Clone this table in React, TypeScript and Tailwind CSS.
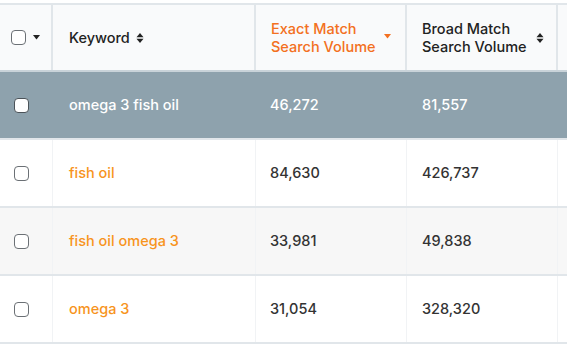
import React from "react";

const cols = "grid grid-cols-[53px_203px_151px_151px_1fr]";

function Box({ dark }: { dark?: boolean }) {
  return (
    <div
      className={`w-[15px] h-[15px] rounded-[4px] border-[1.5px] ${dark ? "border-[#4b5359] bg-white" : "border-[#6b7075] bg-white"}`}
    />
  );
}

function SortBoth() {
  return (
    <svg width="8" height="12" viewBox="0 0 8 12" className="shrink-0">
      <path d="M4 1 L7.5 5.2 L0.5 5.2 Z" fill="#222" />
      <path d="M4 11 L7.5 6.8 L0.5 6.8 Z" fill="#222" />
    </svg>
  );
}

const rows = [
  { kw: "omega 3 fish oil", exact: "46,272", broad: "81,557", sel: true },
  { kw: "fish oil", exact: "84,630", broad: "426,737" },
  { kw: "fish oil omega 3", exact: "33,981", broad: "49,838", alt: true },
  { kw: "omega 3", exact: "31,054", broad: "328,320" },
];

export default function App() {
  return (
    <div
      className="w-[567px] h-[345px] bg-white overflow-hidden pt-[3px]"
      style={{ fontFamily: 'Inter, "Liberation Sans", sans-serif' }}
    >
      <div className={`${cols} h-[67px] bg-[#f9fafb] border-t-2 border-[#e1e6ea] text-[14.5px] font-medium text-[#222] leading-[18px]`}>
        <div className="flex items-center pl-[11px] gap-[7px] border-r-2 border-[#e1e6ea]">
          <Box />
          <svg width="7" height="5" viewBox="0 0 7 5">
            <path d="M0 0 L7 0 L3.5 4.5 Z" fill="#222" />
          </svg>
        </div>
        <div className="flex items-center pl-[16px] gap-[6px] border-r-2 border-[#e1e6ea]">
          <span>Keyword</span>
          <SortBoth />
        </div>
        <div className="flex items-center pl-[15px] border-r-2 border-[#e1e6ea] text-[#f37021]">
          <span className="w-[112px]">Exact Match Search Volume</span>
          <svg width="7" height="5" viewBox="0 0 7 5" className="ml-[1px] mb-[2px]">
            <path d="M0 0 L7 0 L3.5 4.5 Z" fill="#f37021" />
          </svg>
        </div>
        <div className="flex items-center pl-[15px] border-r-2 border-[#e1e6ea]">
          <span className="w-[112px]">Broad Match Search Volume</span>
          <span className="ml-[2px]"><SortBoth /></span>
        </div>
        <div />
      </div>
      {rows.map((r) => (
        <div
          key={r.kw}
          className={`${cols} h-[68px] border-t-2 text-[14.5px] font-medium ${
            r.sel
              ? "bg-[#8ea2ad] border-[#c9d3d9] text-white"
              : r.alt
              ? "bg-[#f7f7f7] border-[#e1e6ea] text-[#333]"
              : "bg-white border-[#e1e6ea] text-[#333]"
          }`}
        >
          <div className={`flex items-center pl-[14px] ${r.sel ? "" : "border-r border-[#f1f3f5]"}`}>
            <Box dark={r.sel} />
          </div>
          <div className={`flex items-center pl-[16px] ${r.sel ? "text-white" : "text-[#f7941d]"} ${r.sel ? "" : "border-r border-[#f1f3f5]"}`}>
            {r.kw}
          </div>
          <div className={`flex items-center pl-[14px] ${r.sel ? "" : "border-r border-[#f1f3f5]"}`}>{r.exact}</div>
          <div className={`flex items-center pl-[15px] ${r.sel ? "" : "border-r border-[#f1f3f5]"}`}>{r.broad}</div>
          <div />
        </div>
      ))}
      <div className="border-t-2 border-[#e1e6ea]" />
    </div>
  );
}
